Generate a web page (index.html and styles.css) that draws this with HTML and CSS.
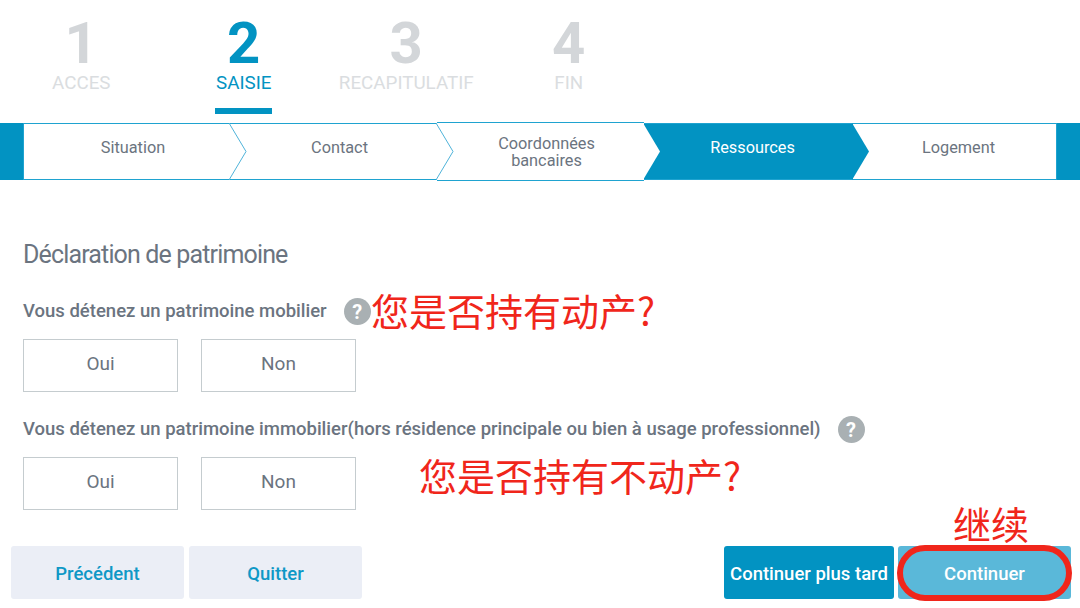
FILE: index.html
```html
<!DOCTYPE html>
<html lang="fr">
<head>
    <meta charset="UTF-8">
    <title>Déclaration de patrimoine</title>
    <link rel="stylesheet" href="styles.css">
</head>
<body>
    <ul class="steps">
        <li class="step"><span class="step-num">1</span><span class="step-label">ACCES</span></li>
        <li class="step active"><span class="step-num">2</span><span class="step-label">SAISIE</span></li>
        <li class="step"><span class="step-num">3</span><span class="step-label">RECAPITULATIF</span></li>
        <li class="step"><span class="step-num">4</span><span class="step-label">FIN</span></li>
    </ul>

    <div class="process">
        <div class="tab">
            Situation
            <svg class="arrow" width="18" height="57" viewBox="0 0 18 57"><path d="M0 0 L17 28.500 L0 57" fill="#fff" stroke="#4fb3d9" stroke-width="1"/></svg>
        </div>
        <div class="tab">
            Contact
            <svg class="arrow" width="18" height="57" viewBox="0 0 18 57"><path d="M0 0 L17 28.500 L0 57" fill="#fff" stroke="#4fb3d9" stroke-width="1"/></svg>
        </div>
        <div class="tab tall">
            Coordonnées<br>bancaires
            <svg class="arrow" width="18" height="57" viewBox="0 0 18 57"><path d="M0 0 L17 28.500 L0 57" fill="#fff"/></svg>
        </div>
        <div class="tab current">
            Ressources
            <svg class="arrow" width="18" height="57" viewBox="0 0 18 57"><path d="M0 0 L17 28.500 L0 57" fill="#0293c2"/></svg>
        </div>
        <div class="tab last">Logement</div>
    </div>

    <main class="form">
        <h2>Déclaration de patrimoine</h2>

        <div class="question first">
            <span>Vous détenez un patrimoine mobilier</span>
            <span class="help">?</span>
        </div>
        <div class="choices">
            <button class="choice">Oui</button>
            <button class="choice">Non</button>
        </div>

        <div class="question">
            <span>Vous détenez un patrimoine immobilier(hors résidence principale ou bien à usage professionnel)</span>
            <span class="help">?</span>
        </div>
        <div class="choices">
            <button class="choice">Oui</button>
            <button class="choice">Non</button>
        </div>
    </main>

    <div class="actions">
        <div class="actions-group left">
            <button class="btn light">Précédent</button>
            <button class="btn light">Quitter</button>
        </div>
        <div class="actions-group">
            <button class="btn primary">Continuer plus tard</button>
            <button class="btn next">Continuer</button>
        </div>
    </div>

    <!-- red notes drawn on top of the screenshot -->
    <div class="note note-1">您是否持有动产?</div>
    <div class="note note-2">您是否持有不动产?</div>
    <div class="note note-3">继续</div>
    <div class="ring"></div>
</body>
</html>
```

FILE: styles.css
```css
* {
    box-sizing: border-box;
}

body {
    margin: 0;
    width: 1080px;
    height: 608px;
    overflow: hidden;
    position: relative;
    background: #fff;
    font-family: 'Roboto', sans-serif;
    color: #6b7480;
}

.steps {
    display: flex;
    list-style: none;
    margin: 0;
    padding: 0;
    height: 123px;
}

.step {
    width: 162.500px;
    display: flex;
    flex-direction: column;
    align-items: center;
    color: #dadde0;
}

.step-num {
    font-size: 58px;
    font-weight: 700;
    line-height: 58px;
    margin-top: 14px;
    color: #d3d6d9;
}

.step-label {
    font-size: 18.800px;
    line-height: 22px;
    padding-bottom: 14px;
    border-bottom: 6px solid transparent;
}

.step.active .step-num,
.step.active .step-label {
    color: #0293c2;
}

.step.active .step-label {
    border-bottom-color: #0293c2;
    width: 57px;
    display: flex;
    justify-content: center;
    white-space: nowrap;
}

.process {
    display: flex;
    height: 57px;
    padding: 0 23px;
    background: linear-gradient(to right, #0293c2 23px, transparent 23px, transparent 1057px, #0293c2 1057px);
}

.tab {
    flex: 0 0 207px;
    position: relative;
    display: flex;
    align-items: center;
    justify-content: center;
    text-align: center;
    padding: 0 0 8px 12px;
    font-size: 16.300px;
    line-height: 17px;
    background: #fff;
    border-top: 1px solid #1fa3d0;
    border-bottom: 1px solid #1fa3d0;
}

.tab:first-child {
    border-left: 1px solid #1fa3d0;
}

.tab.last {
    flex: 1;
    padding-left: 8px;
    border-right: 1px solid #1fa3d0;
}

.tab.tall {
    margin: -1px 0;
    padding: 0 0 0 12px;
}

.tab.current {
    flex-basis: 209px;
    padding-left: 8px;
    background: #0293c2;
    color: #fff;
}

.arrow {
    position: absolute;
    top: -1px;
    right: -17px;
    z-index: 1;
}

.tab.tall .arrow {
    top: 0;
}

.form {
    padding: 61px 23px 0;
}

h2 {
    margin: 0;
    font-size: 25px;
    font-weight: 400;
    line-height: 28px;
    letter-spacing: -0.85px;
    color: #6b7480;
}

.question {
    display: flex;
    align-items: center;
    gap: 17px;
    height: 28px;
    margin-top: 23px;
    font-size: 18.500px;
    font-weight: 500;
}

.question.first {
    margin-top: 28px;
}

.help {
    width: 27px;
    height: 27px;
    margin-top: 1px;
    border-radius: 50%;
    background: #a9b0b3;
    color: #fff;
    display: flex;
    align-items: center;
    justify-content: center;
    font-size: 20px;
    font-weight: 700;
}

.choices {
    display: flex;
    gap: 23px;
    margin-top: 14px;
}

.choice {
    width: 155px;
    height: 53px;
    padding: 0 0 4px;
    background: #fff;
    border: 1px solid #c5cccf;
    font-family: inherit;
    font-size: 19px;
    color: #6b7480;
}

.actions {
    display: flex;
    justify-content: space-between;
    padding: 0 9px 0 11px;
    margin-top: 36px;
}

.actions-group {
    display: flex;
    gap: 4px;
}

.actions-group.left {
    gap: 5px;
}

.btn {
    height: 53px;
    width: 173px;
    padding: 2px 0 0;
    border: none;
    border-radius: 3px;
    font-family: inherit;
    font-size: 18.500px;
    font-weight: 500;
}

.btn.light {
    background: #ebeef6;
    color: #0f98c6;
}

.btn.primary {
    width: 170px;
    background: #0293c2;
    color: #fff;
}

.btn.next {
    background: #5ab8d9;
    color: #fff;
}

.note {
    position: absolute;
    color: #f0261b;
    font-family: 'Noto Sans CJK SC', sans-serif;
    font-size: 38px;
    line-height: 40px;
    white-space: nowrap;
}

.note-1 {
    left: 371px;
    top: 290px;
}

.note-2 {
    left: 419px;
    top: 455px;
}

.note-3 {
    left: 953px;
    top: 503px;
}

.ring {
    position: absolute;
    left: 897px;
    top: 545px;
    width: 175px;
    height: 56px;
    border: 6px solid #f0261b;
    border-radius: 28px;
}
```
